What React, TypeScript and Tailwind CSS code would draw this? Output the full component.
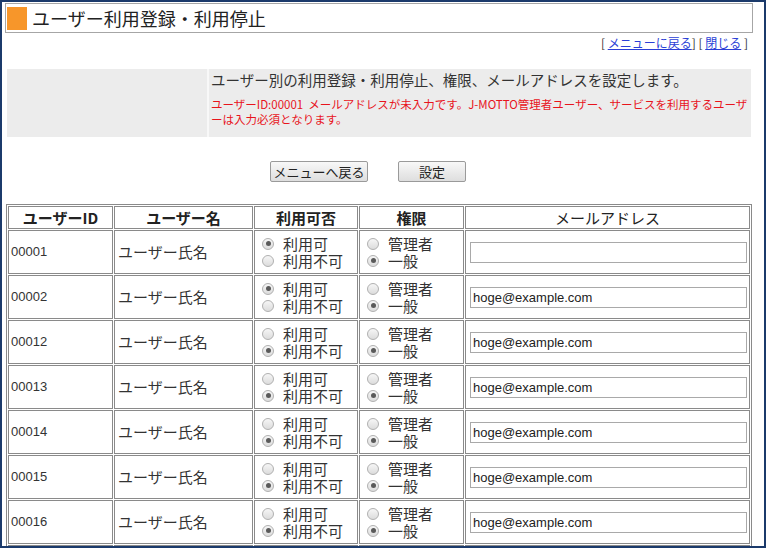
import React from "react";

const JP = "font-['Noto_Sans_CJK_JP','Noto_Sans',sans-serif]";
const AR = "font-['Liberation_Sans',Arial,sans-serif]";

type Row = { id: string; use: boolean; admin: boolean; email: string };

const rows: Row[] = [
  { id: "00001", use: true, admin: false, email: "" },
  { id: "00002", use: true, admin: false, email: "hoge@example.com" },
  { id: "00012", use: false, admin: false, email: "hoge@example.com" },
  { id: "00013", use: false, admin: false, email: "hoge@example.com" },
  { id: "00014", use: false, admin: false, email: "hoge@example.com" },
  { id: "00015", use: false, admin: false, email: "hoge@example.com" },
  { id: "00016", use: false, admin: false, email: "hoge@example.com" },
  { id: "00017", use: false, admin: false, email: "hoge@example.com" },
];

function Radio({ checked }: { checked: boolean }) {
  return (
    <span className="relative inline-block w-[12px] h-[12px] shrink-0 rounded-full border border-[#b0b0b0] bg-linear-to-b from-[#f6f6f6] to-[#dcdcdc]">
      {checked && (
        <span className="absolute left-[2.5px] top-[2.5px] w-[5px] h-[5px] rounded-full bg-[#5a5a5a]" />
      )}
    </span>
  );
}

function RadioLine({ checked, label }: { checked: boolean; label: string }) {
  return (
    <div className="flex items-center gap-[9px] h-[17px]">
      <Radio checked={checked} />
      <span className="text-[15px] leading-[17px] text-[#333]">{label}</span>
    </div>
  );
}

export default function App() {
  return (
    <div className={`w-[766px] h-[548px] overflow-hidden bg-white border-2 border-[#1b3a6b] ${JP}`}>
      {/* Title */}
      <div className="ml-[3px] mt-[1px] w-[748px] h-[30px] border border-[#a6a6a6] flex items-center">
        <div className="ml-[1px] w-[20px] h-[23px] bg-[#f7962a]" />
        <div className="ml-[5px] text-[18px] leading-[24px] text-[#222]">ユーザー利用登録・利用停止</div>
      </div>

      {/* Links */}
      <div className="w-[746px] h-[14px] mt-[3px] flex justify-end text-[12px] leading-[14px] text-[#333]">
        <span>[&nbsp;</span>
        <a className="text-[#2b3fd6] underline">メニューに戻る</a>
        <span>]&nbsp;[&nbsp;</span>
        <a className="text-[#2b3fd6] underline">閉じる</a>
        <span>&nbsp;]</span>
      </div>

      {/* Info box */}
      <div className="ml-[5px] mt-[19px] w-[744px] h-[68px] flex">
        <div className="w-[200px] bg-[#ececec]" />
        <div className="w-[2px] bg-[#f8f8f8]" />
        <div className="flex-1 bg-[#ececec] pl-[2px] pt-[1px]">
          <div className="text-[14.5px] leading-[20px] text-[#333] whitespace-nowrap">
            ユーザー別の利用登録・利用停止、権限、メールアドレスを設定します。
          </div>
          <div className="mt-[7px] text-[11.5px] leading-[15px] text-[#e8141c] whitespace-nowrap">
            <div>ユーザーID:00001&nbsp;&nbsp;メールアドレスが未入力です。J-MOTTO管理者ユーザー、サービスを利用するユーザ</div>
            <div>ーは入力必須となります。</div>
          </div>
        </div>
      </div>

      {/* Buttons */}
      <div className="mt-[24px] h-[21px] flex">
        <button className="ml-[268px] w-[98px] h-[21px] border border-[#9a9a9a] rounded-[2px] bg-linear-to-b from-[#f8f8f8] to-[#dedede] text-[13px] leading-[19px] text-[#222]">
          メニューへ戻る
        </button>
        <button className="ml-[30px] w-[68px] h-[21px] border border-[#9a9a9a] rounded-[2px] bg-linear-to-b from-[#f8f8f8] to-[#dedede] text-[13px] leading-[19px] text-[#222]">
          設定
        </button>
      </div>

      {/* Table */}
      <table className="ml-[4px] mt-[22px] w-[746px] table-fixed border-separate border-spacing-[1px] border border-[#8a8a8a]">
        <colgroup>
          <col className="w-[105px]" />
          <col className="w-[139px]" />
          <col className="w-[104px]" />
          <col className="w-[105px]" />
          <col className="w-[285px]" />
        </colgroup>
        <thead>
          <tr>
            <th className="h-[23px] p-0 border border-[#8a8a8a] text-[15px] leading-[20px] font-bold text-[#222] text-center">ユーザーID</th>
            <th className="h-[23px] p-0 border border-[#8a8a8a] text-[15px] leading-[20px] font-bold text-[#222] text-center">ユーザー名</th>
            <th className="h-[23px] p-0 border border-[#8a8a8a] text-[15px] leading-[20px] font-bold text-[#222] text-center">利用可否</th>
            <th className="h-[23px] p-0 border border-[#8a8a8a] text-[15px] leading-[20px] font-bold text-[#222] text-center">権限</th>
            <th className="h-[23px] p-0 border border-[#8a8a8a] text-[15px] leading-[20px] font-normal text-[#222] text-center">メールアドレス</th>
          </tr>
        </thead>
        <tbody>
          {rows.map((r) => (
            <tr key={r.id}>
              <td className={`h-[44px] p-0 pl-[2px] border border-[#8a8a8a] text-[13px] text-[#333] ${AR}`}>{r.id}</td>
              <td className="h-[44px] p-0 pl-[3px] border border-[#8a8a8a] text-[15px] text-[#333]">ユーザー氏名</td>
              <td className="h-[44px] p-0 pl-[7px] border border-[#8a8a8a]">
                <RadioLine checked={r.use} label="利用可" />
                <RadioLine checked={!r.use} label="利用不可" />
              </td>
              <td className="h-[44px] p-0 pl-[7px] border border-[#8a8a8a]">
                <RadioLine checked={r.admin} label="管理者" />
                <RadioLine checked={!r.admin} label="一般" />
              </td>
              <td className="h-[44px] p-0 pl-[4px] border border-[#8a8a8a]">
                <input
                  type="text"
                  defaultValue={r.email}
                  className={`block w-[277px] h-[21px] border border-[#a9a9a9] px-[2px] text-[13px] text-[#222] outline-none ${AR}`}
                />
              </td>
            </tr>
          ))}
        </tbody>
      </table>
    </div>
  );
}
